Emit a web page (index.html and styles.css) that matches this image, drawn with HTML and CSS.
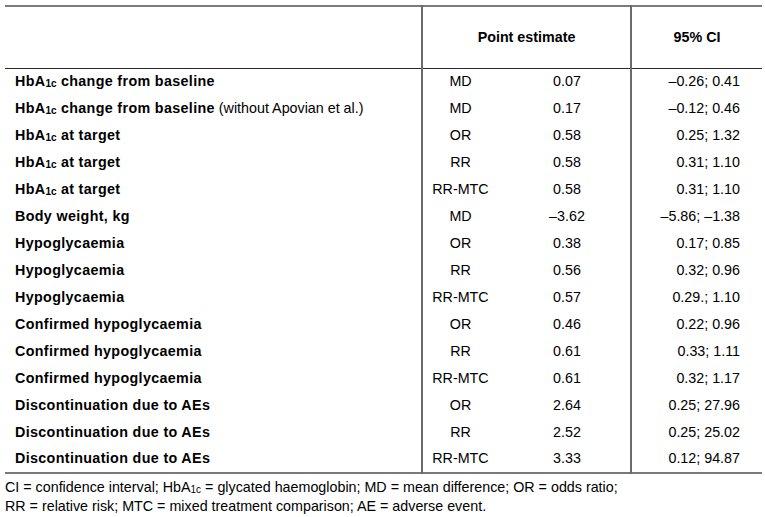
FILE: index.html
```html
<!DOCTYPE html>
<html>
<head>
<meta charset="utf-8">
<link rel="stylesheet" href="styles.css">
</head>
<body>
<div class="page">
<table class="results">
<colgroup>
<col class="c-label"><col class="c-type"><col class="c-val"><col class="c-ci">
</colgroup>
<thead>
<tr>
<th class="label"></th>
<th class="pe" colspan="2">Point estimate</th>
<th class="ci">95% CI</th>
</tr>
</thead>
<tbody>
<tr><td class="label"><b>HbA<span class="sub">1c</span> change from baseline</b></td><td class="type">MD</td><td class="val">0.07</td><td class="ci">–0.26; 0.41</td></tr>
<tr><td class="label"><b>HbA<span class="sub">1c</span> change from baseline</b> (without Apovian et al.)</td><td class="type">MD</td><td class="val">0.17</td><td class="ci">–0.12; 0.46</td></tr>
<tr><td class="label"><b>HbA<span class="sub">1c</span> at target</b></td><td class="type">OR</td><td class="val">0.58</td><td class="ci">0.25; 1.32</td></tr>
<tr><td class="label"><b>HbA<span class="sub">1c</span> at target</b></td><td class="type">RR</td><td class="val">0.58</td><td class="ci">0.31; 1.10</td></tr>
<tr><td class="label"><b>HbA<span class="sub">1c</span> at target</b></td><td class="type">RR-MTC</td><td class="val">0.58</td><td class="ci">0.31; 1.10</td></tr>
<tr><td class="label"><b>Body weight, kg</b></td><td class="type">MD</td><td class="val">–3.62</td><td class="ci">–5.86; –1.38</td></tr>
<tr><td class="label"><b>Hypoglycaemia</b></td><td class="type">OR</td><td class="val">0.38</td><td class="ci">0.17; 0.85</td></tr>
<tr><td class="label"><b>Hypoglycaemia</b></td><td class="type">RR</td><td class="val">0.56</td><td class="ci">0.32; 0.96</td></tr>
<tr><td class="label"><b>Hypoglycaemia</b></td><td class="type">RR-MTC</td><td class="val">0.57</td><td class="ci">0.29.; 1.10</td></tr>
<tr><td class="label"><b>Confirmed hypoglycaemia</b></td><td class="type">OR</td><td class="val">0.46</td><td class="ci">0.22; 0.96</td></tr>
<tr><td class="label"><b>Confirmed hypoglycaemia</b></td><td class="type">RR</td><td class="val">0.61</td><td class="ci">0.33; 1.11</td></tr>
<tr><td class="label"><b>Confirmed hypoglycaemia</b></td><td class="type">RR-MTC</td><td class="val">0.61</td><td class="ci">0.32; 1.17</td></tr>
<tr><td class="label"><b>Discontinuation due to AEs</b></td><td class="type">OR</td><td class="val">2.64</td><td class="ci">0.25; 27.96</td></tr>
<tr><td class="label"><b>Discontinuation due to AEs</b></td><td class="type">RR</td><td class="val">2.52</td><td class="ci">0.25; 25.02</td></tr>
<tr><td class="label"><b>Discontinuation due to AEs</b></td><td class="type">RR-MTC</td><td class="val">3.33</td><td class="ci">0.12; 94.87</td></tr>
</tbody>
</table>
<p class="note">CI = confidence interval; HbA<span class="sub">1c</span> = glycated haemoglobin; MD = mean difference; OR = odds ratio;<br>RR = relative risk; MTC = mixed treatment comparison; AE = adverse event.</p>
</div>
</body>
</html>
```
FILE: styles.css
```css
html, body {
  margin: 0;
  padding: 0;
  background: #fff;
}
.page {
  padding: 5px 3px 0 5px;
  font-family: "Liberation Sans", Arial, sans-serif;
  font-size: 14.3px;
  color: #000;
}
.results {
  width: 757px;
  border-collapse: collapse;
  table-layout: fixed;
}
.c-label { width: 417px; }
.c-type { width: 76px; }
.c-val { width: 133px; }
.c-ci { width: 131px; }
.results thead tr {
  height: 62px;
  border-top: 2px solid #7a7a7a;
  border-bottom: 1px solid #2a2a2a;
}
.results th {
  font-weight: bold;
  text-align: center;
  padding: 0;
}
.results th.pe, .results th.ci {
  border-left: 2px solid #6a6a6a;
}
.results tbody tr {
  height: 27px;
}
.results tbody tr:last-child {
  border-bottom: 2px solid #7a7a7a;
}
.results td {
  padding: 0 0 2px 0;
  white-space: nowrap;
}
.results td.label {
  padding-left: 10px;
}
.results td b {
  letter-spacing: 0.35px;
}
.results td.type {
  border-left: 2px solid #6a6a6a;
  text-align: center;
}
.results td.val {
  text-align: center;
  padding-left: 6px;
}
.results td.ci {
  border-left: 2px solid #6a6a6a;
  text-align: right;
  padding-right: 22px;
}
.sub {
  font-size: 10px;
  vertical-align: -1px;
  line-height: 0;
  letter-spacing: 0;
}
.note {
  margin: 4px 0 0 0;
  line-height: 19px;
}
```
